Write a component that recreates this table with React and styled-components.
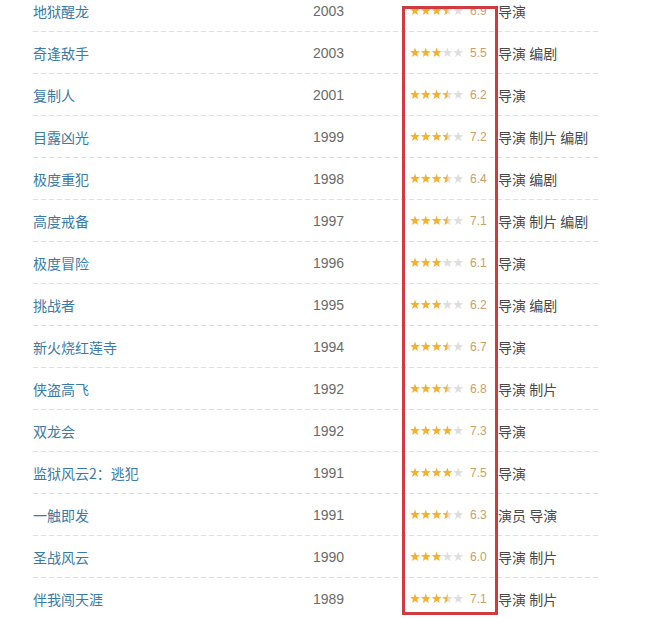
import React from 'react'
import styled, { createGlobalStyle } from 'styled-components'

const Global = createGlobalStyle`
  html, body {
    margin: 0;
    padding: 0;
    background: #fff;
    overflow: hidden;
  }
  body {
    font-family: Arial, "Liberation Sans", "Noto Sans CJK SC", sans-serif;
  }
`;

const Page = styled.div`
  position: relative;
  width: 658px;
  height: 618px;
  overflow: hidden;
`;

const List = styled.ul`
  list-style: none;
  margin: -10px 0 0 33px;
  padding: 0;
  width: 567px;
`;

// dashed separator drawn as a 1px gradient strip at the bottom of each row
const Row = styled.li`
  display: grid;
  grid-template-columns: 280px 96px 61px 29px 1fr;
  align-items: center;
  height: 42px;
  box-sizing: border-box;
  padding-bottom: 1px;
  background-image: repeating-linear-gradient(90deg, #dedede 0 5px, transparent 5px 8px);
  background-size: 100% 1px;
  background-position: 0 100%;
  background-repeat: no-repeat;
`;

const Title = styled.a`
  color: #3a7aa6;
  font-size: 14px;
  text-decoration: none;
  font-family: "Noto Sans CJK SC", "Liberation Sans", sans-serif;
`;

const Year = styled.span`
  color: #6b6b6b;
  font-size: 14px;
  font-family: "Liberation Sans", Arial, sans-serif;
`;

const Rating = styled.span`
  color: #c9a06a;
  font-size: 12px;
  font-family: "Liberation Sans", Arial, sans-serif;
`;

const Roles = styled.span`
  color: #4a4a4a;
  font-size: 14px;
  margin-left: -1px;
  font-family: "Noto Sans CJK SC", "Liberation Sans", sans-serif;
  white-space: nowrap;
`;

const StarsSvg = styled.svg`
  display: block;
  margin-left: 1px;
`;

const Highlight = styled.div`
  position: absolute;
  left: 402px;
  top: 6px;
  width: 90px;
  height: 603px;
  border: 3px solid #cf3b3e;
  pointer-events: none;
`;

const FULL = '5,0.1 6.23,3.6 9.95,3.69 7,5.95 8.06,9.51 5,7.4 1.94,9.51 3,5.95 0.05,3.69 3.77,3.6';
const HALF = '5,0.1 5,7.4 1.94,9.51 3,5.95 0.05,3.69 3.77,3.6';

const Stars = ({ value }) => (
  <StarsSvg width="54" height="11" viewBox="0 0 54 11">
    {[0, 1, 2, 3, 4].map(i => {
      const x = i * 10.8;
      return (
        <g key={i} transform={`translate(${x} 0.5)`}>
          <polygon points={FULL} fill={value >= i + 1 ? '#f5b02e' : '#dedede'} />
          {value > i && value < i + 1 && <polygon points={HALF} fill="#f5b02e" />}
        </g>
      );
    })}
  </StarsSvg>
);

const films = [
  ['地狱醒龙', '2003', 3.5, '6.9', '导演'],
  ['奇逢敌手', '2003', 3, '5.5', '导演 编剧'],
  ['复制人', '2001', 3.5, '6.2', '导演'],
  ['目露凶光', '1999', 3.5, '7.2', '导演 制片 编剧'],
  ['极度重犯', '1998', 3.5, '6.4', '导演 编剧'],
  ['高度戒备', '1997', 3.5, '7.1', '导演 制片 编剧'],
  ['极度冒险', '1996', 3, '6.1', '导演'],
  ['挑战者', '1995', 3, '6.2', '导演 编剧'],
  ['新火烧红莲寺', '1994', 3.5, '6.7', '导演'],
  ['侠盗高飞', '1992', 3.5, '6.8', '导演 制片'],
  ['双龙会', '1992', 4, '7.3', '导演'],
  ['监狱风云2：逃犯', '1991', 4, '7.5', '导演'],
  ['一触即发', '1991', 3.5, '6.3', '演员 导演'],
  ['圣战风云', '1990', 3, '6.0', '导演 制片'],
  ['伴我闯天涯', '1989', 3.5, '7.1', '导演 制片'],
];

const App = () => {
  return (
    <Page>
      <Global />
      <List>
        {films.map(([title, year, stars, rating, roles]) => (
          <Row key={title}>
            <Title href="#">{title}</Title>
            <Year>{year}</Year>
            <Stars value={stars} />
            <Rating>{rating}</Rating>
            <Roles>{roles}</Roles>
          </Row>
        ))}
      </List>
      <Highlight />
    </Page>
  )
}

export default App
